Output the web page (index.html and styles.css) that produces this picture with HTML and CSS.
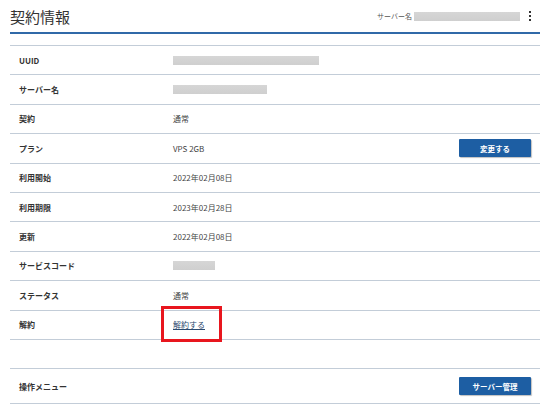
FILE: index.html
```html
<!DOCTYPE html>
<html lang="ja">
<head>
<meta charset="utf-8">
<link rel="stylesheet" href="styles.css">
</head>
<body>
<div class="page">
  <header class="header">
    <h1 class="title">契約情報</h1>
    <div class="header-right">
      <span class="server-label">サーバー名</span>
      <span class="redact redact-head"></span>
      <span class="kebab"><i></i><i></i><i></i></span>
    </div>
  </header>
  <div class="table">
    <div class="row"><div class="label">UUID</div><div class="value"><span class="redact redact-uuid"></span></div></div>
    <div class="row"><div class="label">サーバー名</div><div class="value"><span class="redact redact-name"></span></div></div>
    <div class="row"><div class="label">契約</div><div class="value">通常</div></div>
    <div class="row"><div class="label">プラン</div><div class="value">VPS 2GB</div><button class="btn">変更する</button></div>
    <div class="row"><div class="label">利用開始</div><div class="value">2022年02月08日</div></div>
    <div class="row"><div class="label">利用期限</div><div class="value">2023年02月28日</div></div>
    <div class="row"><div class="label">更新</div><div class="value">2022年02月08日</div></div>
    <div class="row"><div class="label">サービスコード</div><div class="value"><span class="redact redact-code"></span></div></div>
    <div class="row"><div class="label">ステータス</div><div class="value">通常</div></div>
    <div class="row"><div class="label">解約</div><div class="value"><span class="cancel-wrap"><a class="link" href="#">解約する</a><span class="highlight"></span></span></div></div>
    <div class="row row-empty"></div>
    <div class="row row-menu"><div class="label">操作メニュー</div><div class="value"></div><button class="btn">サーバー管理</button></div>
  </div>
</div>
</body>
</html>
```

FILE: styles.css
```css
html, body {
  margin: 0;
  padding: 0;
  background: #ffffff;
}
body {
  font-family: "Noto Sans CJK JP", "Noto Sans", sans-serif;
  color: #333333;
}
.page {
  padding: 0 10px;
}
.header {
  display: flex;
  align-items: center;
  justify-content: space-between;
  height: 32px;
  border-bottom: 2px solid #3069a8;
  box-sizing: content-box;
}
.title {
  margin: 0;
  font-size: 15px;
  font-weight: 400;
  color: #333333;
  line-height: 20px;
  padding-top: 1px;
}
.header-right {
  display: flex;
  align-items: center;
  padding-right: 9px;
}
.server-label {
  font-size: 7px;
  color: #555555;
  margin-right: 2px;
}
.redact {
  display: inline-block;
  background: linear-gradient(#d6d6d6, #cfcfcf);
  vertical-align: middle;
}
.redact-head { width: 106px; height: 9px; }
.redact-uuid { width: 146px; height: 9px; }
.redact-name { width: 94px; height: 9px; }
.redact-code { width: 42px; height: 9px; }
.kebab {
  display: flex;
  flex-direction: column;
  gap: 2px;
  margin-left: 9px;
}
.kebab i {
  display: block;
  width: 2px;
  height: 2px;
  background: #333333;
}
.table {
  margin-top: 11px;
  border-top: 1px solid #c3cdd8;
}
.row {
  display: flex;
  align-items: center;
  height: 29.4px;
  box-sizing: border-box;
  border-bottom: 1px solid #c3cdd8;
  padding: 0 9px;
}
.row-empty { height: 29.4px; }
.row-menu { height: 35px; }
.label {
  width: 154px;
  flex: none;
  font-size: 8px;
  font-weight: 700;
  color: #333333;
}
.value {
  flex: 1;
  font-size: 8px;
  color: #444444;
  display: flex;
  align-items: center;
}
.btn {
  flex: none;
  width: 72px;
  height: 18px;
  border: none;
  border-radius: 1px;
  background: #1d5ea3;
  color: #ffffff;
  font-family: "Noto Sans CJK JP", "Noto Sans", sans-serif;
  font-size: 7.5px;
  font-weight: 700;
  padding: 0;
  box-shadow: 1px 1px 1px rgba(0, 0, 0, 0.25);
}
.cancel-wrap {
  position: relative;
  display: inline-block;
}
.link {
  color: #2b4a6f;
  text-decoration: underline;
  font-size: 8px;
}
.highlight {
  position: absolute;
  left: -12px;
  top: -13px;
  width: 55px;
  height: 30px;
  border: 3px solid #e8161e;
}
```
